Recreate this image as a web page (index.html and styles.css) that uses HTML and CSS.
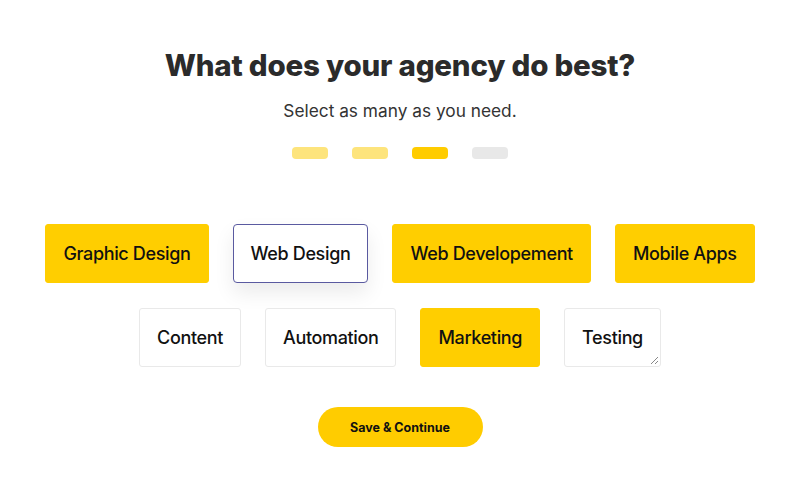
FILE: index.html
```html
<!DOCTYPE html>
<html lang="en">
<head>
<meta charset="utf-8">
<title>What does your agency do best?</title>
<link rel="stylesheet" href="styles.css">
</head>
<body>
<main class="page">
  <h1 class="title">What does your agency do best?</h1>
  <p class="subtitle">Select as many as you need.</p>
  <div class="steps">
    <span class="step step-done"></span>
    <span class="step step-done"></span>
    <span class="step step-current"></span>
    <span class="step"></span>
  </div>
  <div class="options">
    <div class="row">
      <div class="chip chip-on">Graphic Design</div>
      <div class="chip chip-focus">Web Design</div>
      <div class="chip chip-on">Web Developement</div>
      <div class="chip chip-on">Mobile Apps</div>
    </div>
    <div class="row">
      <div class="chip">Content</div>
      <div class="chip">Automation</div>
      <div class="chip chip-on">Marketing</div>
      <div class="chip chip-resize">Testing<span class="grip"></span></div>
    </div>
  </div>
  <button class="cta" type="button">Save &amp; Continue</button>
</main>
</body>
</html>
```
FILE: styles.css
```css
html, body {
  margin: 0;
  padding: 0;
  background: #ffffff;
}
body {
  font-family: "Inter", "Liberation Sans", sans-serif;
  color: #111111;
}
.page {
  display: flex;
  flex-direction: column;
  align-items: center;
  padding-top: 45px;
}
.title {
  margin: 0;
  font-size: 29.5px;
  line-height: 40px;
  font-weight: 800;
  color: #2b2b2b;
  letter-spacing: -0.2px;
}
.subtitle {
  margin: 14px 0 0;
  font-size: 17.3px;
  line-height: 24px;
  font-weight: 400;
  color: #333333;
}
.steps {
  display: flex;
  gap: 24px;
  margin-top: 24px;
}
.step {
  width: 36px;
  height: 12px;
  border-radius: 4px;
  background: #e8e8e8;
}
.step-done {
  background: #fde47c;
}
.step-current {
  background: #ffcc00;
}
.options {
  display: flex;
  flex-direction: column;
  gap: 25px;
  margin-top: 65px;
}
.row {
  display: flex;
  justify-content: center;
  gap: 24px;
}
.chip {
  position: relative;
  box-sizing: border-box;
  height: 59px;
  padding: 0 17px;
  display: flex;
  align-items: center;
  font-size: 18px;
  font-weight: 500;
  letter-spacing: -0.35px;
  color: #111111;
  background: #ffffff;
  border: 1px solid #e9e9e9;
  border-radius: 3px;
}
.chip-on {
  background: #ffce00;
  border-color: #ffce00;
}
.chip-focus {
  border-color: #5a5aa0;
  border-radius: 4px;
  box-shadow: 0 10px 20px rgba(0, 0, 0, 0.08);
}
.grip {
  position: absolute;
  right: 2px;
  bottom: 2px;
  width: 7px;
  height: 7px;
  background:
    linear-gradient(135deg, transparent 45%, #888 45%, #888 55%, transparent 55%, transparent 75%, #888 75%, #888 85%, transparent 85%);
}
.cta {
  margin-top: 40px;
  width: 165px;
  height: 40px;
  border: none;
  border-radius: 20px;
  background: #ffcc00;
  font-family: "Inter", "Liberation Sans", sans-serif;
  font-size: 12.5px;
  font-weight: 700;
  color: #111111;
  cursor: pointer;
}
```
